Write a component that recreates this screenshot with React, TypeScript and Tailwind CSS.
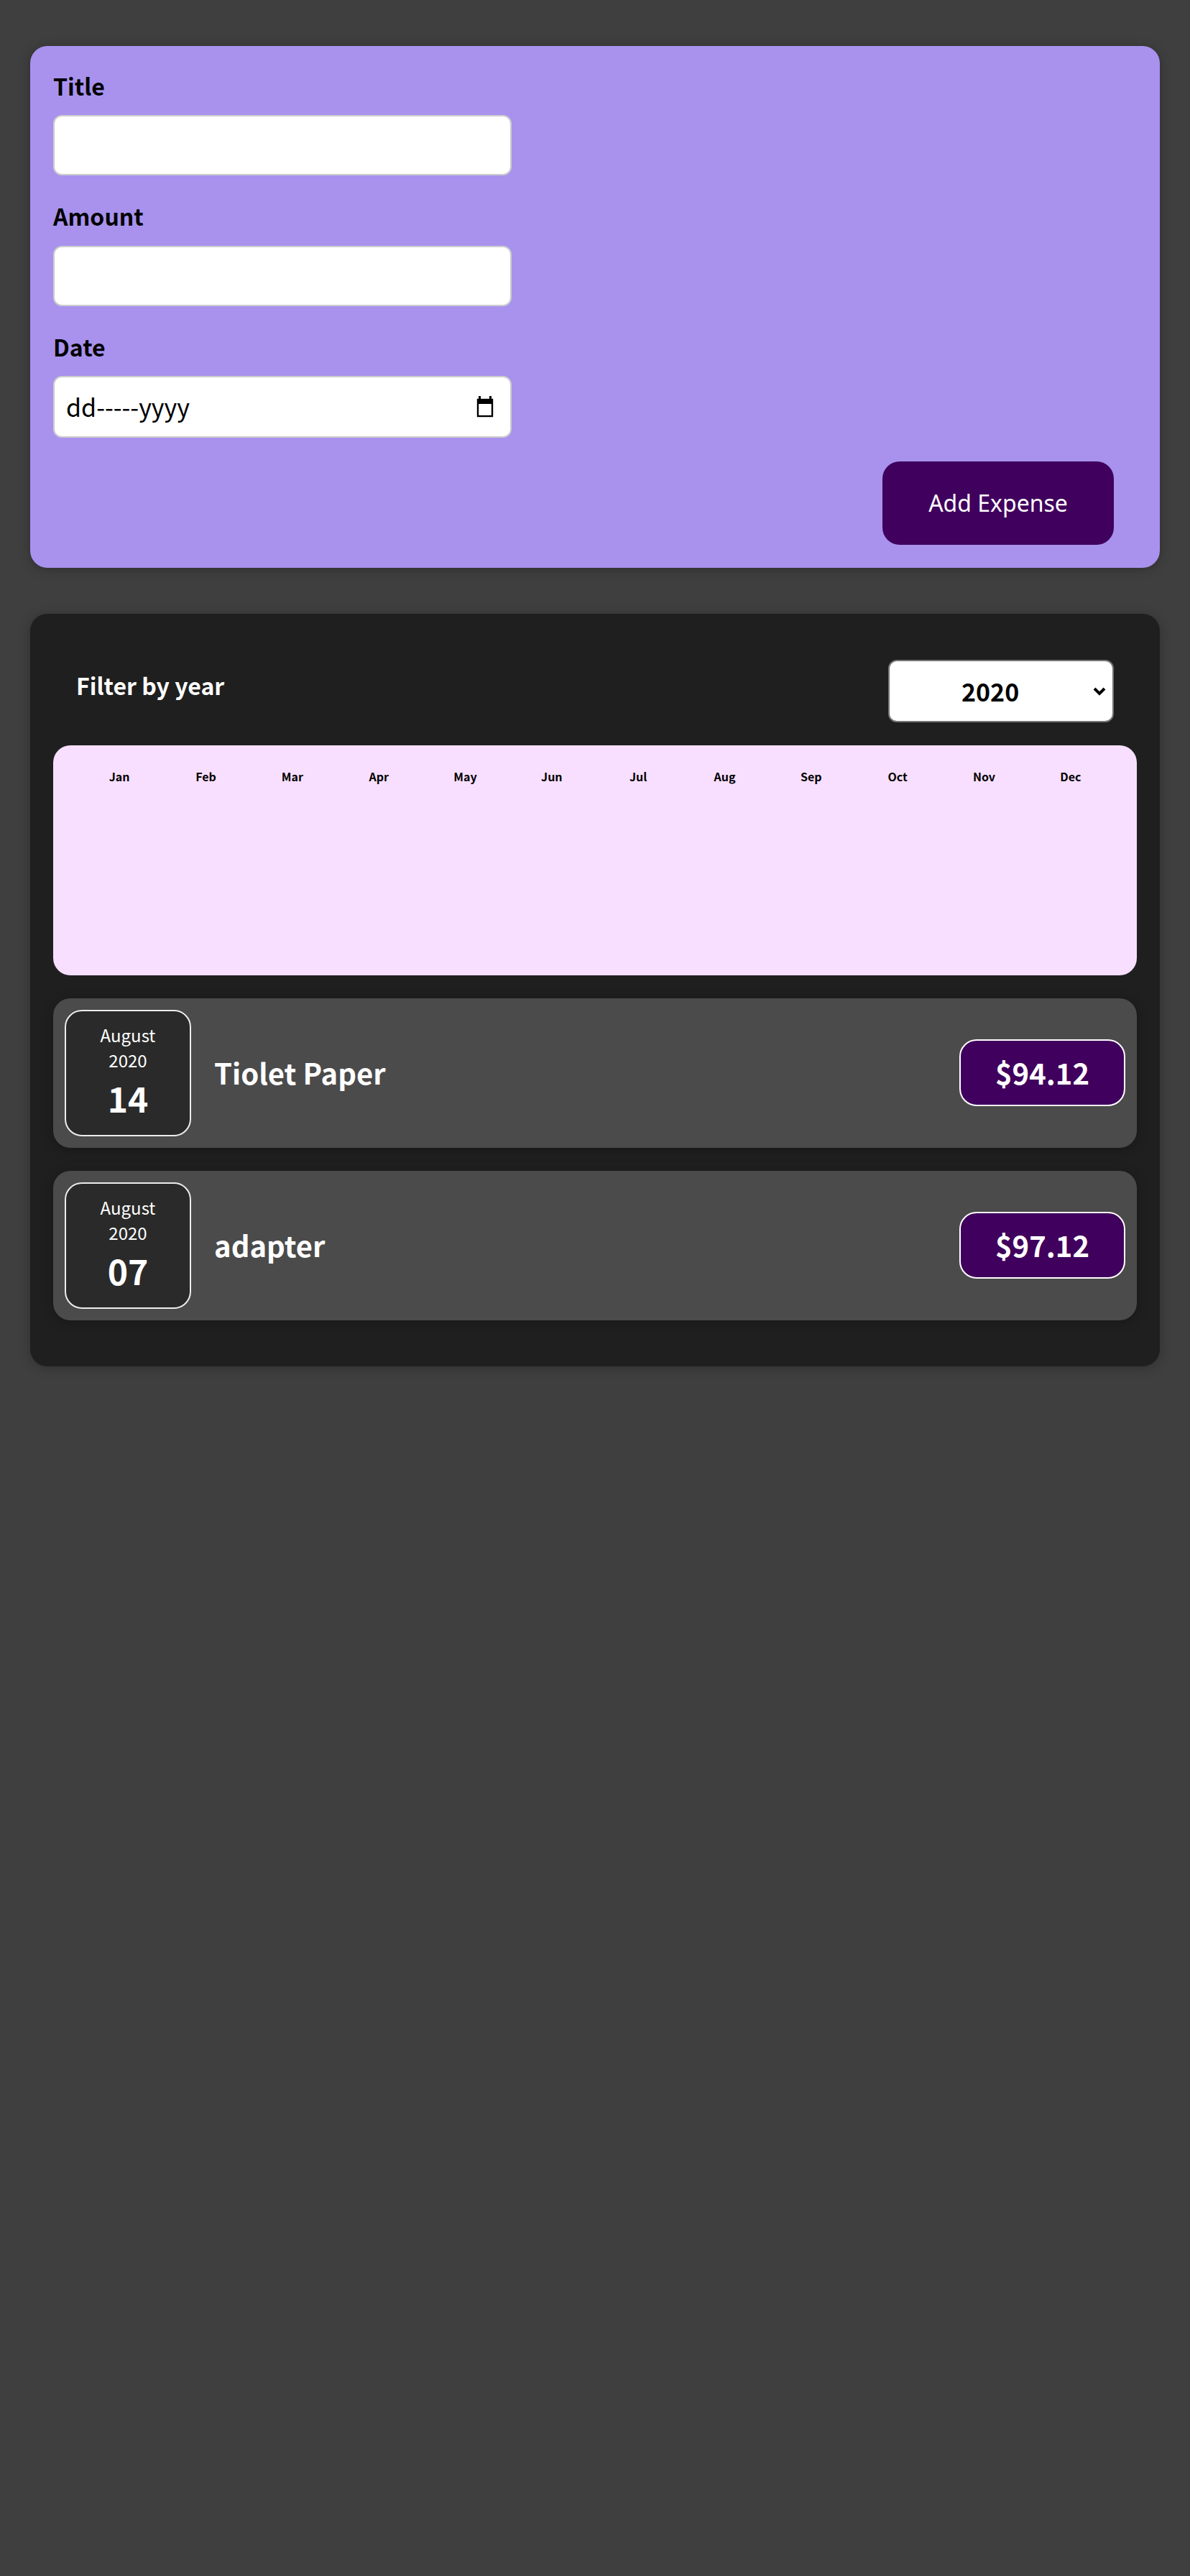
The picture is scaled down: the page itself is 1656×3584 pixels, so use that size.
import { useState } from 'react'

const months = ['Jan', 'Feb', 'Mar', 'Apr', 'May', 'Jun', 'Jul', 'Aug', 'Sep', 'Oct', 'Nov', 'Dec']

const expenses = [
  { id: 'e1', title: 'Tiolet Paper', amount: 94.12, month: 'August', year: '2020', day: '14' },
  { id: 'e2', title: 'adapter', amount: 97.12, month: 'August', year: '2020', day: '07' },
]

function CalendarIcon() {
  return (
    <svg width="26" height="30" viewBox="0 0 26 30" className="text-black">
      <rect x="4" y="0" width="3" height="5" fill="currentColor" />
      <rect x="19" y="0" width="3" height="5" fill="currentColor" />
      <rect x="2" y="4" width="22" height="7" fill="currentColor" />
      <rect x="3" y="5" width="20" height="23" fill="none" stroke="currentColor" strokeWidth="2.4" />
    </svg>
  )
}

function NewExpense() {
  const [title, setTitle] = useState('')
  const [amount, setAmount] = useState('')
  const [date, setDate] = useState('')

  return (
    <form
      onSubmit={(e) => e.preventDefault()}
      className="mx-auto w-[1572px] rounded-[24px] bg-[#a892ee] p-8 shadow-[0_2px_16px_rgba(0,0,0,0.25)]"
    >
      <div className="flex flex-col gap-[33px]">
        <div>
          <label className="mb-[18px] block text-[32px] font-bold text-black">Title</label>
          <input
            type="text"
            value={title}
            onChange={(e) => setTitle(e.target.value)}
            className="block h-[84px] w-[638px] rounded-[12px] border-2 border-[#ccc] bg-white px-4 text-[32px] outline-none"
          />
        </div>
        <div>
          <label className="mb-[18px] block text-[32px] font-bold text-black">Amount</label>
          <input
            type="text"
            value={amount}
            onChange={(e) => setAmount(e.target.value)}
            className="block h-[84px] w-[638px] rounded-[12px] border-2 border-[#ccc] bg-white px-4 text-[32px] outline-none"
          />
        </div>
        <div>
          <label className="mb-[18px] block text-[32px] font-bold text-black">Date</label>
          <div className="flex h-[86px] w-[638px] items-center rounded-[12px] border-2 border-[#ccc] bg-white pl-4 pr-[22px]">
            <input
              type="text"
              value={date}
              onChange={(e) => setDate(e.target.value)}
              placeholder="dd-----yyyy"
              className="min-w-0 flex-1 bg-transparent text-[34px] text-black outline-none placeholder:text-black"
            />
            <CalendarIcon />
          </div>
        </div>
      </div>
      <div className="mt-[33px] flex justify-end">
        <button
          type="submit"
          className="mr-8 flex h-[116px] w-[322px] items-center justify-center rounded-[24px] bg-[#40005d] font-['Noto_Sans',sans-serif] text-[32px] text-white"
        >
          Add Expense
        </button>
      </div>
    </form>
  )
}

function ExpensesFilter() {
  const [year, setYear] = useState('2020')
  return (
    <div className="my-8 flex items-center justify-between px-8">
      <label className="mb-4 text-[32px] font-bold text-white">Filter by year</label>
      <div className="relative h-[87px] w-[314px]">
        <select
          value={year}
          onChange={(e) => setYear(e.target.value)}
          className="h-full w-full appearance-none rounded-[12px] border-2 border-[#767676] bg-white pl-[100px] text-[34px] font-bold text-black outline-none"
        >
          <option value="2022">2022</option>
          <option value="2021">2021</option>
          <option value="2020">2020</option>
          <option value="2019">2019</option>
        </select>
        <svg
          width="18"
          height="12"
          viewBox="0 0 18 12"
          className="pointer-events-none absolute right-[11px] top-[38px]"
        >
          <path d="M2 2 L9 9 L16 2" fill="none" stroke="black" strokeWidth="4" />
        </svg>
      </div>
    </div>
  )
}

function Chart() {
  return (
    <div className="grid h-[320px] grid-cols-12 items-start rounded-[24px] bg-[#f8dfff] p-8 text-center">
      {months.map((m) => (
        <div key={m} className="text-[16px] font-bold text-black">
          {m}
        </div>
      ))}
    </div>
  )
}

function ExpenseItem({ e }: { e: (typeof expenses)[number] }) {
  return (
    <div className="flex h-[208px] items-center rounded-[24px] bg-[#4b4b4b] p-4 shadow-[0_2px_16px_rgba(0,0,0,0.25)]">
      <div className="flex h-[176px] w-[176px] flex-col items-center justify-center rounded-[24px] border-2 border-[#ececec] bg-[#2a2a2a] text-white">
        <div className="text-[24px]">{e.month}</div>
        <div className="text-[24px]">{e.year}</div>
        <div className="text-[48px] font-bold">{e.day}</div>
      </div>
      <h2 className="mx-8 flex-1 text-[40px] font-bold text-white">{e.title}</h2>
      <div className="flex h-[93px] items-center rounded-[24px] border-2 border-white bg-[#40005d] px-12 text-[40px] font-bold text-white">
        ${e.amount.toFixed(2)}
      </div>
    </div>
  )
}

export default function App() {
  return (
    <div className="min-h-screen bg-[#3f3f3f] pt-16 font-['Noto_Sans_CJK_JP','Noto_Sans',sans-serif] leading-[1.448]">
      <NewExpense />
      <div className="mx-auto mt-16 w-[1572px] rounded-[24px] bg-[#1f1f1f] p-8 shadow-[0_2px_16px_rgba(0,0,0,0.25)]">
        <ExpensesFilter />
        <Chart />
        <div className="my-8 flex flex-col gap-8">
          {expenses.map((e) => (
            <ExpenseItem key={e.id} e={e} />
          ))}
        </div>
      </div>
    </div>
  )
}
